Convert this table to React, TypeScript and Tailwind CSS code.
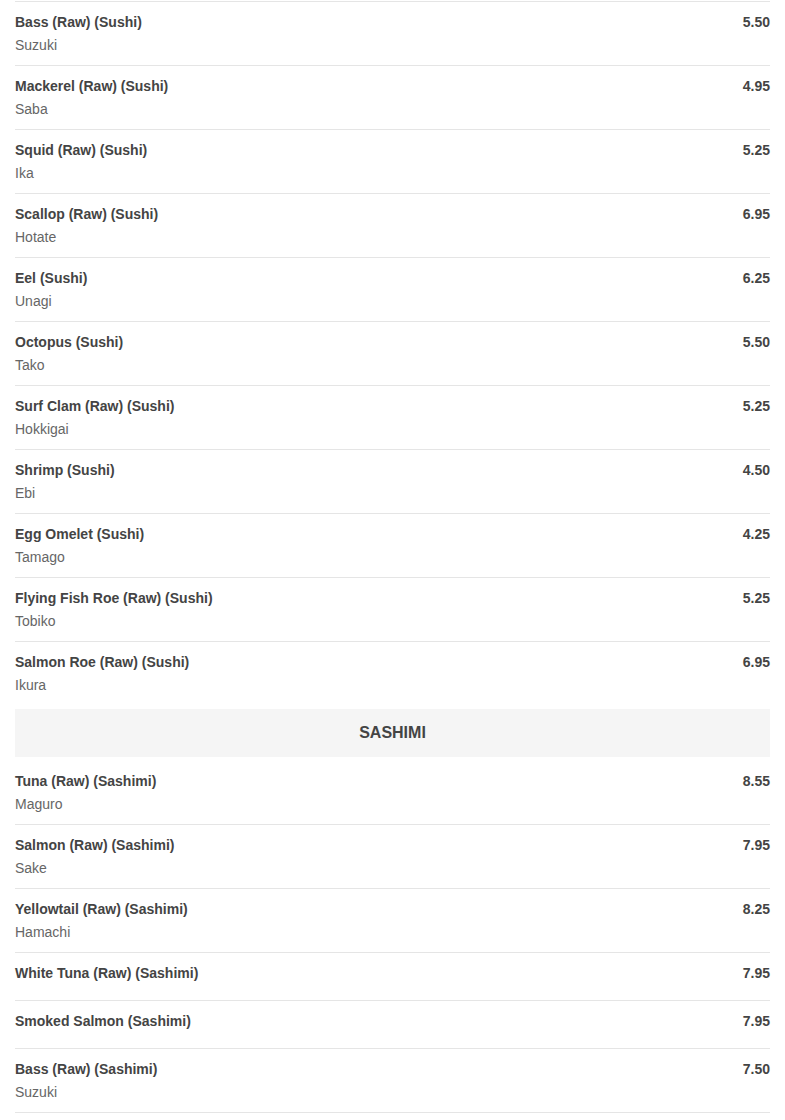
import React from "react";

type Item = { name: string; sub?: string; price: string };

const sushi: Item[] = [
  { name: "Bass (Raw) (Sushi)", sub: "Suzuki", price: "5.50" },
  { name: "Mackerel (Raw) (Sushi)", sub: "Saba", price: "4.95" },
  { name: "Squid (Raw) (Sushi)", sub: "Ika", price: "5.25" },
  { name: "Scallop (Raw) (Sushi)", sub: "Hotate", price: "6.95" },
  { name: "Eel (Sushi)", sub: "Unagi", price: "6.25" },
  { name: "Octopus (Sushi)", sub: "Tako", price: "5.50" },
  { name: "Surf Clam (Raw) (Sushi)", sub: "Hokkigai", price: "5.25" },
  { name: "Shrimp (Sushi)", sub: "Ebi", price: "4.50" },
  { name: "Egg Omelet (Sushi)", sub: "Tamago", price: "4.25" },
  { name: "Flying Fish Roe (Raw) (Sushi)", sub: "Tobiko", price: "5.25" },
  { name: "Salmon Roe (Raw) (Sushi)", sub: "Ikura", price: "6.95" },
];

const sashimi: Item[] = [
  { name: "Tuna (Raw) (Sashimi)", sub: "Maguro", price: "8.55" },
  { name: "Salmon (Raw) (Sashimi)", sub: "Sake", price: "7.95" },
  { name: "Yellowtail (Raw) (Sashimi)", sub: "Hamachi", price: "8.25" },
  { name: "White Tuna (Raw) (Sashimi)", price: "7.95" },
  { name: "Smoked Salmon (Sashimi)", price: "7.95" },
  { name: "Bass (Raw) (Sashimi)", sub: "Suzuki", price: "7.50" },
];

function Row({ item, last }: { item: Item; last?: boolean }) {
  return (
    <div
      className={`flex justify-between items-start pt-[10px] ${
        item.sub ? "pb-[10px]" : "pb-[17px]"
      } ${last ? "" : "border-b border-[#e5e5e5]"}`}
    >
      <div className="flex flex-col">
        <div className="text-[14px] leading-[20px] font-bold text-[#444]">{item.name}</div>
        {item.sub && (
          <div className="mt-[3px] text-[14px] leading-[20px] text-[#666]">{item.sub}</div>
        )}
      </div>
      <div className="text-[14px] leading-[20px] font-bold text-[#444]">{item.price}</div>
    </div>
  );
}

export default function App() {
  return (
    <div
      className="bg-white w-[785px] h-[1120px] overflow-hidden px-[15px]"
      style={{ fontFamily: '"Liberation Sans", Arial, sans-serif' }}
    >
      <div className="h-[1px]" />
      <div className="border-t border-[#e5e5e5]">
        {sushi.map((it, i) => (
          <Row key={i} item={it} last={i === sushi.length - 1} />
        ))}
      </div>
      <div className="my-[4px] h-[48px] bg-[#f5f5f5] flex items-center justify-center text-[16px] font-bold text-[#444]">
        SASHIMI
      </div>
      <div>
        {sashimi.map((it, i) => (
          <Row key={i} item={it} />
        ))}
      </div>
    </div>
  );
}
